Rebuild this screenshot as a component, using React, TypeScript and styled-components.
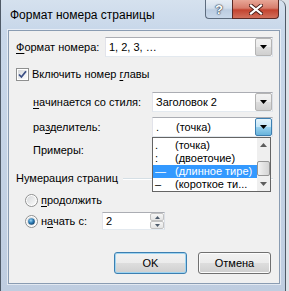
import React from 'react';
import styled, { createGlobalStyle, css } from 'styled-components';

const GlobalStyle = createGlobalStyle`
  html, body {
    margin: 0;
    padding: 0;
  }
  body {
    width: 289px;
    height: 291px;
    overflow: hidden;
    background: #dde2e8;
    font-family: 'Liberation Sans', Arial, sans-serif;
    font-size: 11px;
    color: #000;
  }
`;

const Window = styled.div`
  box-sizing: border-box;
  width: 286px;
  height: 292px;
  display: flex;
  flex-direction: column;
  border: 1px solid #4f5a67;
  border-top: none;
  border-radius: 0 7px 0 0;
  background: linear-gradient(to bottom, #d5e1ee 0px, #c9d8ea 28px, #bfcde0 100%);
`;

const TitleBar = styled.div`
  height: 30px;
  display: flex;
  align-items: flex-start;
  flex-shrink: 0;
`;

const Title = styled.div`
  flex: 1;
  padding: 8px 0 0 9px;
  font-size: 12px;
  line-height: 15px;
  color: #000;
`;

const CaptionButtons = styled.div`
  display: flex;
  margin-right: 6px;
`;

const CaptionButton = styled.div<{ $kind: 'help' | 'close' }>`
  box-sizing: border-box;
  height: 19px;
  display: flex;
  align-items: center;
  justify-content: center;
  border: 1px solid #5d6c7e;
  border-top: none;
  ${({ $kind }) =>
    $kind === 'help'
      ? css`
          width: 27px;
          border-right: none;
          border-radius: 0 0 0 4px;
          background: linear-gradient(to bottom, #e6edf5 0%, #d3dfec 45%, #bccde1 55%, #c9d8ea 100%);
          color: #fff;
          font-weight: bold;
          font-size: 13px;
          text-shadow: 0 0 1px #2e3d50, 0 0 1px #2e3d50, 0 0 2px #2e3d50;
        `
      : css`
          width: 47px;
          border-color: #5b2a25;
          border-radius: 0 0 4px 0;
          background: linear-gradient(to bottom, #e8a797 0%, #d77d6c 45%, #c3432f 55%, #d1705c 100%);
        `}
`;

const Client = styled.div`
  position: relative;
  flex: 1;
  display: flex;
  flex-direction: column;
  margin: 0 5px 7px 7px;
  padding: 6px 6px 0 7px;
  border: 1px solid #8a9cb2;
  box-shadow: 0 0 0 1px rgba(255, 255, 255, 0.55);
  background: #f0f0f0;
`;

const Row = styled.div<{ $top: number; $indent?: number; $height?: number }>`
  display: flex;
  align-items: center;
  margin-top: ${({ $top }) => $top}px;
  margin-left: ${({ $indent }) => $indent || 0}px;
  height: ${({ $height }) => $height || 15}px;
`;

const Label = styled.div<{ $width?: number }>`
  ${({ $width }) =>
    $width &&
    css`
      width: ${$width}px;
      flex-shrink: 0;
    `}
  white-space: nowrap;
  line-height: 15px;
`;

const Key = styled.span`
  text-decoration: underline;
  text-underline-offset: 2px;
`;

const Combo = styled.div`
  box-sizing: border-box;
  flex: 1;
  height: 20px;
  display: flex;
  align-items: stretch;
  border: 1px solid #abadb3;
  border-left-color: #e2e3ea;
  border-right-color: #dbdfe6;
  border-bottom-color: #e3e9ef;
  background: #fff;
`;

const ComboText = styled.div`
  flex: 1;
  padding-left: 3px;
  line-height: 18px;
  white-space: nowrap;
  display: flex;
`;

const ComboButton = styled.div<{ $active?: boolean }>`
  box-sizing: border-box;
  width: 17px;
  margin: 0;
  display: flex;
  align-items: center;
  justify-content: center;
  border: 1px solid ${({ $active }) => ($active ? '#3c7fb1' : '#b4b4b4')};
  border-radius: 2px;
  background: ${({ $active }) =>
    $active
      ? 'linear-gradient(to bottom, #e5f4fc 0%, #c4e5f6 50%, #98d1ef 51%, #68b3db 100%)'
      : 'linear-gradient(to bottom, #f2f2f2 0%, #ebebeb 50%, #dddddd 51%, #cfcfcf 100%)'};
`;

const Sep = styled.span`
  width: 20px;
  flex-shrink: 0;
`;

const CheckBox = styled.div`
  box-sizing: border-box;
  width: 13px;
  height: 13px;
  margin-right: 3px;
  border: 1px solid #8e8f8f;
  background: #fff;
  padding: 1px;
  flex-shrink: 0;
`;

const CheckInner = styled.div`
  width: 100%;
  height: 100%;
  background: linear-gradient(135deg, #d6d8da 0%, #eef0f2 60%, #fbfbfb 100%);
  display: flex;
  align-items: center;
  justify-content: center;
`;

const GroupHeader = styled.div`
  display: flex;
  align-items: center;
  margin-top: 13px;
  height: 15px;
`;

const GroupLine = styled.div`
  flex: 1;
  height: 1px;
  margin-left: 5px;
  background: #d5dfe5;
  box-shadow: 0 1px 0 #fff;
`;

const RadioWrap = styled.div`
  width: 13px;
  height: 13px;
  margin-right: 3px;
  flex-shrink: 0;
  display: flex;
`;

const SpinBox = styled.div`
  box-sizing: border-box;
  width: 63px;
  height: 18px;
  display: flex;
  border: 1px solid #abadb3;
  border-left-color: #e2e3ea;
  border-right-color: #dbdfe6;
  border-bottom-color: #e3e9ef;
  background: #fff;
`;

const SpinText = styled.div`
  flex: 1;
  padding-left: 3px;
  line-height: 16px;
`;

const SpinButtons = styled.div`
  width: 14px;
  display: flex;
  flex-direction: column;
`;

const SpinButton = styled.div`
  box-sizing: border-box;
  flex: 1;
  display: flex;
  align-items: center;
  justify-content: center;
  border: 1px solid #c2c2c2;
  border-radius: 2px;
  background: linear-gradient(to bottom, #f6f6f6, #e4e4e4);
`;

const ButtonRow = styled.div`
  display: flex;
  justify-content: flex-end;
  gap: 11px;
  margin-top: 22px;
  margin-right: 2px;
`;

const Button = styled.div<{ $default?: boolean }>`
  box-sizing: border-box;
  width: 73px;
  height: 22px;
  display: flex;
  align-items: center;
  justify-content: center;
  border: 1px solid ${({ $default }) => ($default ? '#3c7fb1' : '#707070')};
  border-radius: 3px;
  background: linear-gradient(to bottom, #f2f2f2 0%, #ebebeb 50%, #dddddd 51%, #cfcfcf 100%);
  box-shadow: inset 0 0 0 1px ${({ $default }) => ($default ? '#9fd4f0' : '#fcfcfc')};
`;

const Popup = styled.div`
  position: absolute;
  left: 143px;
  top: 106px;
  box-sizing: border-box;
  width: 119px;
  height: 55px;
  display: flex;
  border: 1px solid #646464;
  background: #fff;
`;

const ListItems = styled.div`
  flex: 1;
  padding-top: 1px;
`;

const ListItem = styled.div<{ $selected?: boolean }>`
  height: 13px;
  line-height: 13px;
  display: flex;
  padding-left: 2px;
  white-space: nowrap;
  overflow: hidden;
  background: ${({ $selected }) => ($selected ? '#3399ff' : 'transparent')};
  color: ${({ $selected }) => ($selected ? '#fff' : '#000')};
`;

const ScrollBar = styled.div`
  width: 13px;
  display: flex;
  flex-direction: column;
  background: #efefef;
`;

const ScrollArrow = styled.div`
  height: 14px;
  display: flex;
  align-items: center;
  justify-content: center;
`;

const ScrollTrack = styled.div`
  flex: 1;
  padding-top: 9px;
`;

const ScrollThumb = styled.div`
  box-sizing: border-box;
  height: 15px;
  border: 1px solid #959595;
  border-radius: 2px;
  background: linear-gradient(to right, #f3f3f3, #e2e2e2 50%, #d4d4d4);
`;

const Arrow = ({ up, color = '#000', w = 7, h = 4 }: { up?: boolean; color?: string; w?: number; h?: number }) => (
  <svg width={w} height={h} viewBox={`0 0 ${w} ${h}`}>
    <path d={up ? `M0 ${h} H${w} L${w / 2} 0 Z` : `M0 0 H${w} L${w / 2} ${h} Z`} fill={color} />
  </svg>
);

const Radio = ({ checked }: { checked?: boolean }) => (
  <RadioWrap>
    <svg width="13" height="13" viewBox="0 0 13 13">
      <defs>
        <linearGradient id="rbg" x1="0" y1="0" x2="1" y2="1">
          <stop offset="0" stopColor="#d5d7d9" />
          <stop offset="1" stopColor="#fbfbfb" />
        </linearGradient>
        <radialGradient id="rdot" cx="0.4" cy="0.35" r="0.7">
          <stop offset="0" stopColor="#9fd6f4" />
          <stop offset="0.5" stopColor="#2f7fb8" />
          <stop offset="1" stopColor="#123e66" />
        </radialGradient>
      </defs>
      <circle cx="6.5" cy="6.5" r="6" fill="#fff" stroke="#8e8f8f" />
      <circle cx="6.5" cy="6.5" r="4.5" fill="url(#rbg)" />
      {checked && <circle cx="6.5" cy="6.5" r="3.3" fill="url(#rdot)" />}
    </svg>
  </RadioWrap>
);

const Check = () => (
  <CheckBox>
    <CheckInner>
      <svg width="9" height="9" viewBox="0 0 9 9">
        <path d="M1 4.5 L3.4 7 L8 1.2" fill="none" stroke="#3b4f85" strokeWidth="1.8" />
      </svg>
    </CheckInner>
  </CheckBox>
);

const CloseGlyph = () => (
  <svg width="14" height="11" viewBox="0 0 14 11">
    <path d="M2 1.5 L12 9.5 M12 1.5 L2 9.5" stroke="#4a1d17" strokeWidth="4" strokeLinecap="square" />
    <path d="M2 1.5 L12 9.5 M12 1.5 L2 9.5" stroke="#fff" strokeWidth="2.2" strokeLinecap="square" />
  </svg>
);

const App: React.FC = () => (
  <>
    <GlobalStyle />
    <Window>
      <TitleBar>
        <Title>Формат номера страницы</Title>
        <CaptionButtons>
          <CaptionButton $kind="help">?</CaptionButton>
          <CaptionButton $kind="close">
            <CloseGlyph />
          </CaptionButton>
        </CaptionButtons>
      </TitleBar>
      <Client>
        <Row $top={0} $height={20}>
          <Label $width={89}>
            <Key>Ф</Key>ормат номера:
          </Label>
          <Combo>
            <ComboText>1, 2, 3, …</ComboText>
            <ComboButton>
              <Arrow />
            </ComboButton>
          </Combo>
        </Row>

        <Row $top={10}>
          <Check />
          <Label>
            Включить номер <Key>г</Key>лавы
          </Label>
        </Row>

        <Row $top={10} $indent={17} $height={20}>
          <Label $width={119}>
            <Key>н</Key>ачинается со стиля:
          </Label>
          <Combo>
            <ComboText>Заголовок 2</ComboText>
            <ComboButton>
              <Arrow />
            </ComboButton>
          </Combo>
        </Row>

        <Row $top={5} $indent={17} $height={20}>
          <Label $width={119}>
            ра<Key>з</Key>делитель:
          </Label>
          <Combo>
            <ComboText>
              <Sep>.</Sep>(точка)
            </ComboText>
            <ComboButton $active>
              <Arrow />
            </ComboButton>
          </Combo>
        </Row>

        <Row $top={6} $indent={17}>
          <Label>Примеры:</Label>
        </Row>

        <GroupHeader>
          <Label>Нумерация страниц</Label>
          <GroupLine />
        </GroupHeader>

        <Row $top={7} $indent={9}>
          <Radio />
          <Label>
            <Key>п</Key>родолжить
          </Label>
        </Row>

        <Row $top={4} $indent={9} $height={18}>
          <Radio checked />
          <Label $width={61}>
            н<Key>а</Key>чать с:
          </Label>
          <SpinBox>
            <SpinText>2</SpinText>
            <SpinButtons>
              <SpinButton>
                <Arrow up w={5} h={3} color="#4d5b6b" />
              </SpinButton>
              <SpinButton>
                <Arrow w={5} h={3} color="#4d5b6b" />
              </SpinButton>
            </SpinButtons>
          </SpinBox>
        </Row>

        <ButtonRow>
          <Button $default>OK</Button>
          <Button>Отмена</Button>
        </ButtonRow>

        <Popup>
          <ListItems>
            <ListItem>
              <Sep>.</Sep>(точка)
            </ListItem>
            <ListItem>
              <Sep>:</Sep>(двоеточие)
            </ListItem>
            <ListItem $selected>
              <Sep>—</Sep>(длинное тире)
            </ListItem>
            <ListItem>
              <Sep>–</Sep>(короткое ти...
            </ListItem>
          </ListItems>
          <ScrollBar>
            <ScrollArrow>
              <Arrow up w={7} h={4} color="#5d5d5d" />
            </ScrollArrow>
            <ScrollTrack>
              <ScrollThumb />
            </ScrollTrack>
            <ScrollArrow>
              <Arrow w={7} h={4} color="#5d5d5d" />
            </ScrollArrow>
          </ScrollBar>
        </Popup>
      </Client>
    </Window>
  </>
);

export default App;
